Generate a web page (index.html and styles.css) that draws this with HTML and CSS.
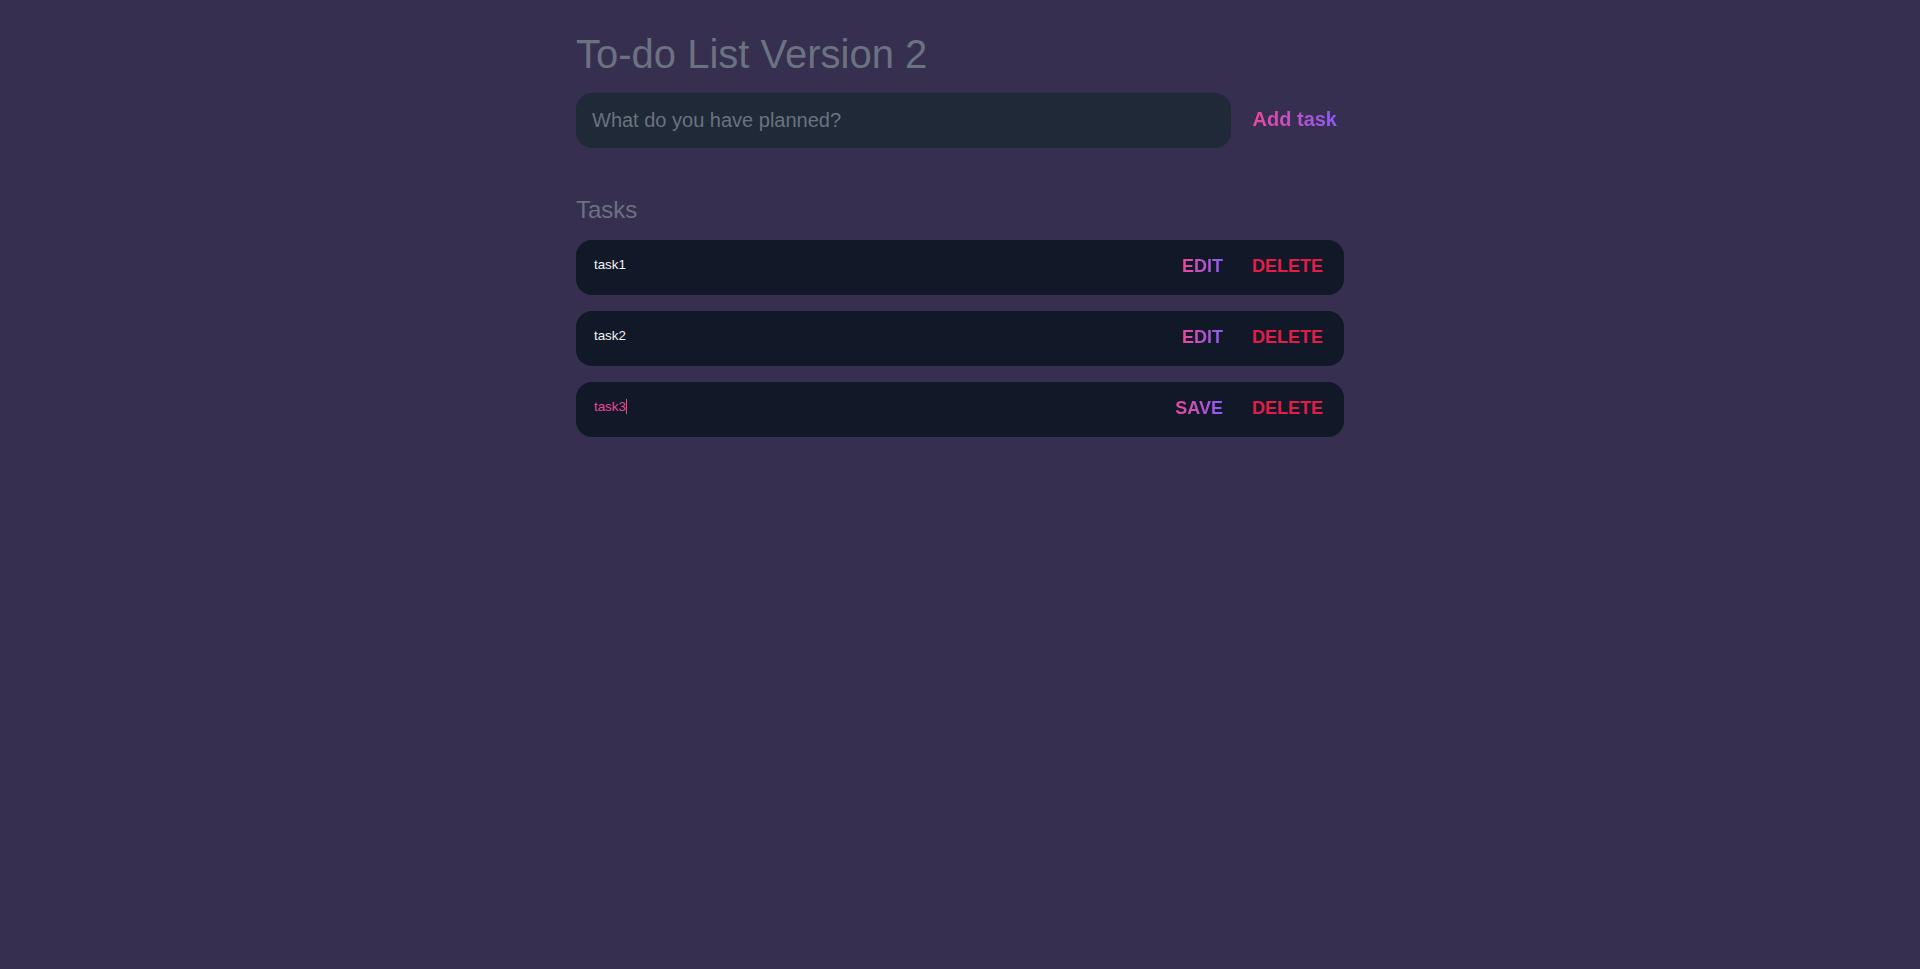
FILE: index.html
```html
<!DOCTYPE html>
<html lang="en">
<head>
<meta charset="utf-8">
<title>To-do List Version 2</title>
<link rel="stylesheet" href="styles.css">
</head>
<body>
<main class="app">
  <h1 class="title">To-do List Version 2</h1>
  <form class="new-task">
    <input class="new-task-input" type="text" placeholder="What do you have planned?">
    <button class="add-btn" type="button"><span class="grad">Add task</span></button>
  </form>
  <h2 class="section-title">Tasks</h2>
  <div class="tasks">
    <div class="task">
      <span class="task-text">task1</span>
      <div class="actions">
        <button class="act"><span class="grad">EDIT</span></button>
        <button class="act del">DELETE</button>
      </div>
    </div>
    <div class="task">
      <span class="task-text">task2</span>
      <div class="actions">
        <button class="act"><span class="grad">EDIT</span></button>
        <button class="act del">DELETE</button>
      </div>
    </div>
    <div class="task editing">
      <span class="task-text">task3<span class="caret"></span></span>
      <div class="actions">
        <button class="act"><span class="grad">SAVE</span></button>
        <button class="act del">DELETE</button>
      </div>
    </div>
  </div>
</main>
</body>
</html>
```

FILE: styles.css
```css
html, body {
  margin: 0;
  padding: 0;
}
body {
  background: #362f4f;
  font-family: "Liberation Sans", Arial, sans-serif;
  min-height: 969px;
}
.app {
  max-width: 768px;
  margin: 0 auto;
  padding-top: 30px;
}
.title {
  margin: 0;
  font-size: 40px;
  line-height: 48px;
  font-weight: 400;
  color: #6b7280;
}
.new-task {
  display: flex;
  align-items: center;
  margin: 15px 0 0;
}
.new-task-input {
  flex: 1;
  height: 55px;
  box-sizing: border-box;
  border: none;
  outline: none;
  border-radius: 16px;
  background: #1f2937;
  padding: 0 16px;
  font-family: "Liberation Sans", Arial, sans-serif;
  font-size: 20px;
  color: #d1d5db;
}
.new-task-input::placeholder {
  color: #6b7280;
}
.add-btn {
  margin: 0 0 3px 15px;
  padding: 0 7px;
  border: none;
  background: none;
  font-family: "Liberation Sans", Arial, sans-serif;
  font-size: 20px;
  font-weight: 700;
  line-height: 24px;
  cursor: pointer;
}
.grad {
  background: linear-gradient(to right, #ec4899, #8b5cf6);
  -webkit-background-clip: text;
  background-clip: text;
  color: transparent;
}
.section-title {
  margin: 48px 0 0;
  font-size: 24px;
  line-height: 28px;
  font-weight: 400;
  color: #6b7280;
}
.tasks {
  display: flex;
  flex-direction: column;
  gap: 16px;
  margin-top: 16px;
}
.task {
  display: flex;
  align-items: center;
  justify-content: space-between;
  height: 55px;
  box-sizing: border-box;
  padding: 0 21px 0 18px;
  background: #111827;
  border-radius: 16px;
}
.task-text {
  font-size: 13.333px;
  line-height: 16px;
  color: #f3f4f6;
  margin-bottom: 6px;
  display: inline-flex;
  align-items: center;
}
.editing .task-text {
  color: #ec4899;
}
.caret {
  display: inline-block;
  width: 1px;
  height: 15px;
  background: #ec4899;
}
.actions {
  display: flex;
  align-items: center;
  justify-content: flex-end;
  gap: 29px;
  margin-bottom: 3px;
}
.act {
  border: none;
  background: none;
  padding: 0;
  font-family: "Liberation Sans", Arial, sans-serif;
  font-size: 18px;
  font-weight: 700;
  line-height: 22px;
  cursor: pointer;
}
.del {
  color: #e11d48;
}
```
